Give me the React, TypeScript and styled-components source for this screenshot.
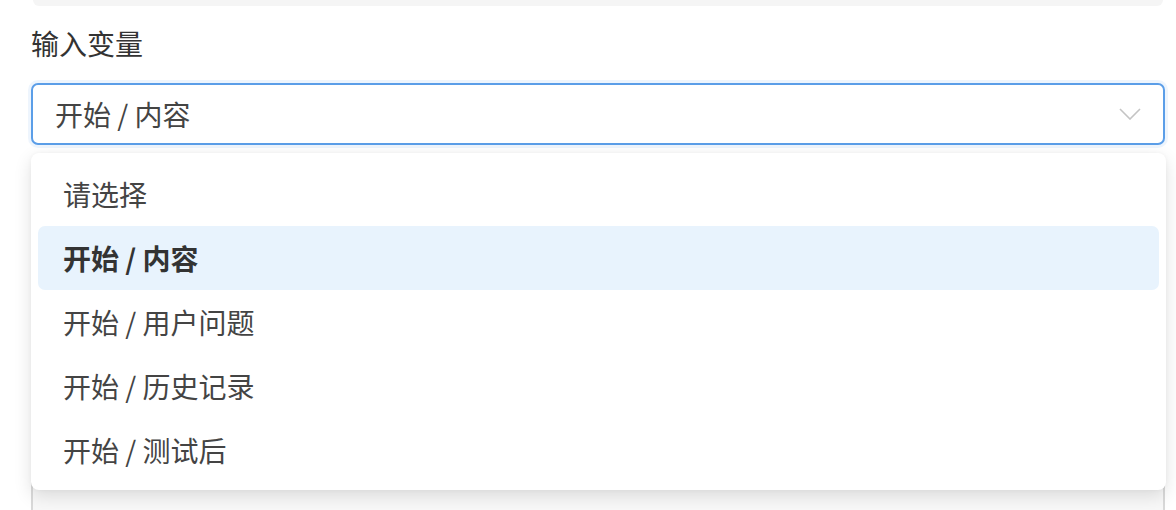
import styled, { createGlobalStyle } from "styled-components";

const options = ["请选择", "开始 / 内容", "开始 / 用户问题", "开始 / 历史记录", "开始 / 测试后"];
const selected = "开始 / 内容";

export default function App() {
  return (
    <>
      <GlobalStyle />
      <Page>
        <PrevField />
        <Label>输入变量</Label>
        <Field>
          <SelectBox>
            <Value>{selected}</Value>
            <Chevron width="22" height="12" viewBox="0 0 22 12">
              <path d="M1 1 L11 11 L21 1" fill="none" stroke="#c4c4c4" strokeWidth="1.6" />
            </Chevron>
          </SelectBox>
          <TextArea />
          <Menu>
            {options.map((o) => (
              <Option key={o} $active={o === selected}>
                {o}
              </Option>
            ))}
          </Menu>
        </Field>
      </Page>
    </>
  );
}

const GlobalStyle = createGlobalStyle`
  html, body {
    margin: 0;
    background: #fff;
    overflow: hidden;
  }
  body {
    font-family: "Noto Sans CJK SC", "Noto Sans", sans-serif;
  }
`;

const Page = styled.div`
  padding: 0 11px 0 31px;
  height: 510px;
  display: flex;
  flex-direction: column;
`;

const PrevField = styled.div`
  flex: none;
  height: 6px;
  margin: 0 2px;
  background: #f5f5f5;
  border-radius: 0 0 8px 8px;
`;

const Label = styled.div`
  margin-top: 17px;
  font-size: 28px;
  line-height: 40px;
  color: #333;
`;

const Field = styled.div`
  position: relative;
  margin-top: 20px;
  display: flex;
  flex-direction: column;
  gap: 20px;
`;

const SelectBox = styled.div`
  flex: none;
  height: 62px;
  box-sizing: border-box;
  border: 2px solid #5b9ee8;
  border-radius: 7px;
  box-shadow: 0 0 0 3px rgba(91, 158, 232, 0.1);
  background: #fff;
  display: flex;
  align-items: center;
  justify-content: space-between;
  padding: 0 22px 0 22px;
`;

const Value = styled.span`
  font-size: 28px;
  color: #444;
`;

const Chevron = styled.svg`
  display: block;
`;

const TextArea = styled.div`
  flex: none;
  height: 400px;
  box-sizing: border-box;
  border: 2px solid #d9d9d9;
  border-radius: 8px;
  background: #f8f8f8;
`;

const Menu = styled.div`
  position: absolute;
  top: 70px;
  left: 0;
  right: -1px;
  box-sizing: border-box;
  padding: 9px 7px 8px;
  background: #fff;
  border-radius: 8px;
  box-shadow: 0 6px 18px rgba(0, 0, 0, 0.12), 0 0 4px rgba(0, 0, 0, 0.04);
`;

const Option = styled.div<{ $active?: boolean }>`
  height: 64px;
  display: flex;
  align-items: center;
  padding-left: 25px;
  border-radius: 7px;
  font-size: 28px;
  color: ${(p) => (p.$active ? "#333" : "#444")};
  font-weight: ${(p) => (p.$active ? 700 : 400)};
  background: ${(p) => (p.$active ? "#e8f3fd" : "transparent")};
`;
